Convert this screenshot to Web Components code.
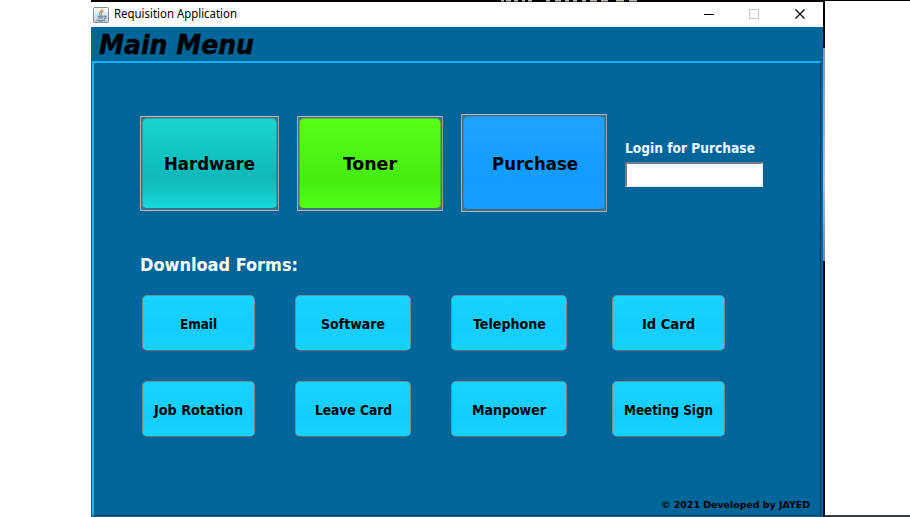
<!DOCTYPE html>
<html lang="en"><head><meta charset="utf-8"><title>Requisition Application</title>
<style>html,body{margin:0;background:#fff}body{width:910px;height:517px;overflow:hidden}</style></head><body>
<app-desktop></app-desktop>
<script>
const define=(name,html,setup)=>customElements.define(name,class extends HTMLElement{
  connectedCallback(){
    if(this.shadowRoot)return;
    const t=document.createElement('template');t.innerHTML=html;
    this.attachShadow({mode:'open'}).append(t.content.cloneNode(true));
    if(setup)setup(this,this.shadowRoot);
  }
});

// A single line of text, stretched to the width given in its "w" attribute.
define('fit-text',`<style>:host{display:block;white-space:nowrap;flex:none;font-family:"DejaVu Sans Condensed","DejaVu Sans",sans-serif;font-stretch:condensed}
span{display:inline-block;transform-origin:0 50%}</style><span><slot></slot></span>`,(el,root)=>{
  const w=+el.getAttribute('w'),s=root.querySelector('span');
  el.style.width=w+'px';
  s.style.transform='scaleX('+w/s.getBoundingClientRect().width+')';
});

define('title-bar',`<style>:host{display:flex;height:25px;background:#fff;align-items:center;color:#000}
.j{margin-left:2px;flex:none}
.t{flex:none;width:123px;margin:-2px 0 0 5px;font:12px/24px "Noto Sans",sans-serif;white-space:nowrap}
.t span{display:inline-block;transform-origin:0 50%}
.c{margin-left:auto;flex:none}</style>
<svg class="j" width="16" height="16" viewBox="0 0 16 16"><defs><linearGradient id="g" x2="0" y2="1"><stop stop-color="#fff"/><stop offset="1" stop-color="#b9cbd8"/></linearGradient></defs>
<rect x=".5" y=".5" width="15" height="15" rx="1" fill="url(#g)" stroke="#7d929f"/>
<path d="M9.4 2.2C10 4.300 6 4.700 6.300 6.500c.1.8 1 1.100 1 2M10.400 4.300C8 5 7.900 5.900 8.500 6.700c.4.600.2 1.300-.4 1.700" fill="none" stroke="#ee7e2c" stroke-width="1.200"/>
<path d="M4.500 9.300h6.200M5 11h5.200M3.500 13.100c2.500.9 6 .9 8.500 0M11 9.300c2.700-.7 2.500 1.700.2 2.300" fill="none" stroke="#56738c" stroke-width="1.100"/></svg>
<div class="t"><span>Requisition Application</span></div>
<svg class="c" width="119" height="25" viewBox="0 0 119 25" fill="none"><path d="M0 12.500h10" stroke="#000"/><rect x="45.500" y="7.500" width="9" height="9" stroke="#c8c8c8"/><path d="M91.500 7.500l9 9m0-9l-9 9" stroke="#000" stroke-width="1.150"/></svg>`,(el,root)=>{
  const s=root.querySelector('.t span');
  s.style.transform='scaleX('+123/s.getBoundingClientRect().width+')';
});

define('etched-button',`<style>:host{display:block;box-sizing:border-box;flex:none;border:1px solid;border-color:#b3b7bc #929ba5 #a7b5c1 #a4abb3;padding:1px;background:#4a7086;color:#000;font:bold 18px/22px "DejaVu Sans"}
.f{box-sizing:border-box;width:100%;height:100%;border:1px solid rgba(70,105,120,.45);border-bottom-color:rgba(60,85,100,.8);border-radius:5px;background:var(--fill) border-box;display:flex;align-items:center;justify-content:center}</style><div class="f"><slot></slot></div>`);

define('form-button',`<style>:host{box-sizing:border-box;display:flex;align-items:center;justify-content:center;height:56px;border:1px solid #688f9e;border-bottom-color:#54717e;border-radius:5px;background:linear-gradient(#1bd3ff,#12cdff 60%,#18d2ff);color:#000;font:bold 14px/18px "DejaVu Sans"}fit-text{margin-top:2px}</style><fit-text><slot></slot></fit-text>`,(el,root)=>{
  const f=root.querySelector('fit-text'),w=+el.getAttribute('w');
  f.style.width=w+'px';
  const s=f.shadowRoot.querySelector('span');
  s.style.transform='none';
  s.style.transform='scaleX('+w/s.getBoundingClientRect().width+')';
});

define('login-field',`<style>:host{display:block;flex:none;width:138px;color:#e9fbff;font:bold 14px/18px "DejaVu Sans"}
input{display:block;box-sizing:border-box;width:138px;height:25px;margin:5px 0 0;padding:0 3px;border:solid;border-width:2px 1px 1px 2px;border-color:#6e7c8b #e8eef2 #e8eef2 #6e7c8b;border-radius:0;background:#fff;outline:0}</style>
<fit-text w="130">Login for Purchase</fit-text><input aria-label="Login for Purchase">`);

define('main-panel',`<style>:host{display:block;box-sizing:border-box;height:455px;margin:0 2px 0 1px;border:solid;border-width:2px 1px 1px 2px;border-color:#16b4ee #003e64 #003e64 #16b4ee}
.top{display:flex;height:98px;margin:51px 0 0 46px;align-items:flex-start}
.top>*{margin-top:2px}.g1{margin-left:18px}.g2{margin:0 0 0 18px}.g2 fit-text{margin:2px 0 0 1px}.g3{margin:25px 0 0 18px}
h2{margin:41px 0 0 46px;height:25px;color:#fff;font:bold 18px/24px "DejaVu Sans"}
.forms{display:grid;grid-template-columns:113px 116px 116px 113px;column-gap:40px;row-gap:30px;margin:17px 0 0 48px}
.forms>:nth-child(4n){margin-left:5px;margin-right:-5px}
footer{display:flex;justify-content:flex-end;margin:61px 10px 0 0;color:#000}footer fit-text{font:bold 9.500px/14px "DejaVu Sans";font-stretch:normal}</style>
<div class="top">
<etched-button style="width:139px;height:95px;--fill:linear-gradient(#19d4d2,#0fb8b9 66%,#12bfbf 75%,#16dcdb)"><fit-text w="91">Hardware</fit-text></etched-button>
<etched-button class="g1" style="width:146px;height:95px;--fill:linear-gradient(#58ff18,#45ee11 68%,#50ff16)"><fit-text w="54">Toner</fit-text></etched-button>
<etched-button class="g2" style="width:146px;height:98px;--fill:linear-gradient(#20a3ff,#119cff 65%,#169fff)"><fit-text w="86">Purchase</fit-text></etched-button>
<login-field class="g3"></login-field></div>
<h2><fit-text w="158">Download Forms:</fit-text></h2>
<div class="forms"><form-button w="37">Email</form-button><form-button w="64">Software</form-button><form-button w="73">Telephone</form-button><form-button w="53">Id Card</form-button>
<form-button w="89">Job Rotation</form-button><form-button w="77">Leave Card</form-button><form-button w="74">Manpower</form-button><form-button w="89">Meeting Sign</form-button></div>
<footer><fit-text w="149">© 2021 Developed by JAYED</fit-text></footer>`);

define('app-window',`<style>:host{display:block;width:732px;height:515px;background:#069}
h1{box-sizing:border-box;margin:0;height:34px;padding-left:8px;color:#000;font:italic bold 26px/37px "DejaVu Sans";-webkit-text-stroke:.4px #000}</style>
<title-bar></title-bar><h1><fit-text w="155">Main Menu</fit-text></h1><main-panel></main-panel>`);

define('app-desktop',`<style>:host{display:grid;width:910px;height:517px;grid-template-columns:91px 732px 2px 85px}
.w{box-sizing:border-box;overflow:hidden;position:relative;height:517px;padding-top:2px;background:#080404}
.w svg{position:absolute;left:409px;top:0}
.edge{background:linear-gradient(#050101 0 38px,#350806 41px,#100404 48px,#8594ab 48px,#b4c0d2 180px,#75859c 261px,#000 261px)}
.r{box-sizing:border-box;height:517px;border-top:1px solid #000;border-bottom:2px solid #343a3e;background:#fff}</style>
<div></div><div class="w"><app-window></app-window><svg width="150" height="2"><path d="M1 0h3m2 0h5m3 0h4m4 0h3m3 0h4m14 0h4m5 0h6m4 0h4m4 0h4m5 0h4m4 0h7m4 0h7m8 0h8m5 0h8" stroke="#bbb6b0" stroke-width="3"/></svg></div><div class="edge"></div><div class="r"></div>`);
</script></body></html>
